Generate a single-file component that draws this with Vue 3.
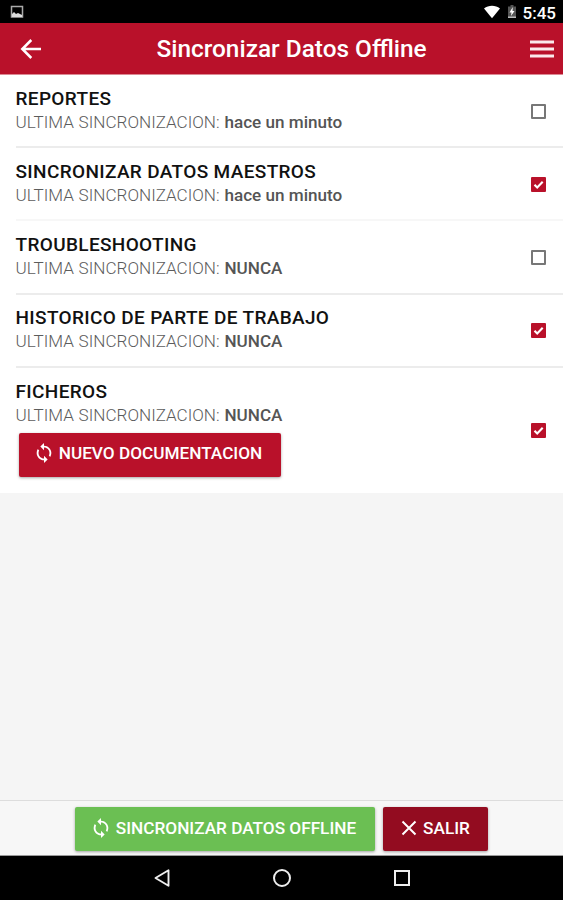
<script setup>
import {ref} from 'vue'

const syncPath = 'M12 4V1L8 5l4 4V6c3.31 0 6 2.69 6 6 0 1.01-.25 1.97-.7 2.8l1.46 1.46C19.54 15.03 20 13.57 20 12c0-4.42-3.58-8-8-8zm0 14c-3.31 0-6-2.69-6-6 0-1.01.25-1.97.7-2.8L5.24 7.74C4.46 8.97 4 10.43 4 12c0 4.42 3.58 8 8 8v3l4-4-4-4v3z'

const items = ref([
    {nombre: 'REPORTES', fecha: 'hace un minuto', checked: false},
    {nombre: 'SINCRONIZAR DATOS MAESTROS', fecha: 'hace un minuto', checked: true},
    {nombre: 'TROUBLESHOOTING', fecha: 'NUNCA', checked: false},
    {nombre: 'HISTORICO DE PARTE DE TRABAJO', fecha: 'NUNCA', checked: true},
    {nombre: 'FICHEROS', fecha: 'NUNCA', checked: true, boton: 'NUEVO DOCUMENTACION'},
])

const toggle = (item) => {
    item.checked = !item.checked
}
</script>

<template>
    <div class="screen">
        <div class="status">
            <svg class="picture" width="14" height="14" viewBox="0 0 14 14">
                <path d="M1.5 1.5h11v10.5h-11z" fill="none" stroke="#aaa" stroke-width="1.5" />
                <path d="M2 12V9l2-2 2 2 2-1 4 2v2z" fill="#ddd" />
            </svg>
            <svg class="wifi" width="18" height="14" viewBox="0 0 18 14">
                <path d="M1 3.6C5.5-.2 12.5-.2 17 3.6L9 13.3z" fill="#fff" />
            </svg>
            <svg class="battery" width="10" height="14" viewBox="0 0 10 14">
                <path d="M3.5 0h3v1.5H9V13H1V1.5h2.5z" fill="#555" />
                <path d="M5.8 2L2.5 7.5h2L4 11l3.5-5h-2z" fill="#fff" />
                <path d="M1 11.5h8V13H1z" fill="#bbb" />
            </svg>
            <span class="clock">5:45</span>
        </div>

        <header class="toolbar">
            <svg class="back" width="22" height="22" viewBox="0 0 22 22">
                <path d="M21 11H2.5M11.3 2L2.3 11l9 9" fill="none" stroke="#fff" stroke-width="2.5" />
            </svg>
            <h1>Sincronizar Datos Offline</h1>
            <svg class="menu" width="24" height="18" viewBox="0 0 24 18">
                <path d="M0 2h24M0 9h24M0 16h24" stroke="#fbe9eb" stroke-width="2.8" />
            </svg>
        </header>

        <main class="content">
            <ul class="list">
                <li v-for="item in items" :key="item.nombre" class="item">
                    <div class="inner">
                        <div class="texts">
                            <h2>{{ item.nombre }}</h2>
                            <p><span class="label">ULTIMA SINCRONIZACION:</span> <b>{{ item.fecha }}</b></p>
                            <button v-if="item.boton" class="btn btn-doc">
                                <svg width="22" height="22" viewBox="0 0 24 24"><path :d="syncPath" fill="#fff" /></svg>
                                <span>{{ item.boton }}</span>
                            </button>
                        </div>
                        <div class="check" :class="{ checked: item.checked }" @click="toggle(item)">
                            <svg v-if="item.checked" width="15" height="15" viewBox="0 0 15 15">
                                <path d="M3.5 7.8l2.7 2.7 5.5-5.8" fill="none" stroke="#fff" stroke-width="2.1" />
                            </svg>
                        </div>
                    </div>
                </li>
            </ul>
        </main>

        <footer class="footer">
            <button class="btn btn-sync">
                <svg width="22" height="22" viewBox="0 0 24 24"><path :d="syncPath" fill="#fff" /></svg>
                <span>SINCRONIZAR DATOS OFFLINE</span>
            </button>
            <button class="btn btn-exit">
                <svg width="16" height="16" viewBox="0 0 16 16"><path d="M1.5 1.5l13 13M14.5 1.5l-13 13" stroke="#fff" stroke-width="2" /></svg>
                <span>SALIR</span>
            </button>
        </footer>

        <nav class="nav">
            <svg width="18" height="20" viewBox="0 0 18 20"><path d="M15.5 2.3v15.4L2.5 10z" fill="none" stroke="#eee" stroke-width="1.9" stroke-linejoin="round" /></svg>
            <svg width="20" height="20" viewBox="0 0 20 20"><circle cx="10" cy="10" r="8" fill="none" stroke="#eee" stroke-width="2" /></svg>
            <svg width="18" height="18" viewBox="0 0 18 18"><path d="M2 2h14v14H2z" fill="none" stroke="#eee" stroke-width="2" /></svg>
        </nav>
    </div>
</template>

<style>
body {
    margin: 0;
    background: #000;
}
</style>

<style scoped>
.screen {
    display: flex;
    flex-direction: column;
    height: 900px;
    overflow: hidden;
    background: #f5f5f5;
    font-family: Roboto, "Liberation Sans", sans-serif;
}
h1, h2, p, ul {
    margin: 0;
    padding: 0;
}
svg {
    display: block;
    flex: none;
}
.status {
    display: flex;
    align-items: center;
    box-sizing: border-box;
    height: 23px;
    padding: 1px 7px 0 10px;
    background: #000;
    color: #fff;
}
.wifi {
    margin-left: auto;
}
.battery {
    margin: 0 6px;
}
.clock {
    font-size: 17px;
    font-weight: 500;
    line-height: 20px;
    margin-top: 2px;
}
.toolbar {
    display: flex;
    align-items: center;
    box-sizing: border-box;
    height: 52px;
    padding: 0 9px 0 20px;
    background: #b9112a;
    border-bottom: 1px solid #dc8993;
    color: #fff;
}
h1 {
    flex: 1;
    padding-left: 11px;
    text-align: center;
    font-size: 24.4px;
    font-weight: 500;
    line-height: 50px;
}
.content {
    flex: 1;
}
.list {
    list-style: none;
    background: #fff;
}
.item {
    padding-left: 15.5px;
}
.inner {
    display: flex;
    align-items: center;
    box-sizing: border-box;
    height: 73.2px;
    padding: 1px 17px 0 0;
    border-bottom: 2px solid #ececec;
}
.item:nth-child(2) .inner {
    border-color: #f7f7f7;
}
.item:last-child .inner {
    height: 125.2px;
    border-bottom: 0;
}
.texts {
    flex: 1;
    align-self: flex-start;
    padding-top: 10.8px;
}
h2 {
    font-size: 19px;
    font-weight: 500;
    line-height: 24px;
    letter-spacing: .35px;
    color: #111;
}
p {
    font-size: 17.1px;
    line-height: 23px;
    color: #5c5c5c;
    white-space: nowrap;
    word-spacing: .6px;
}
.label {
    font-weight: 300;
}
b {
    font-weight: 500;
    color: #555;
    word-spacing: 0;
}
.check {
    box-sizing: border-box;
    width: 15px;
    height: 15px;
    border: 2px solid #777;
    border-radius: 1px;
}
.check.checked {
    border: 0;
    background: #b9112a;
}
.btn {
    display: flex;
    align-items: center;
    justify-content: center;
    gap: 4px;
    height: 44px;
    padding: 0 0 3px;
    border: 0;
    border-radius: 2px;
    box-shadow: 0 1px 3px rgba(0, 0, 0, .35);
    color: #fff;
    font-family: inherit;
    font-size: 17.2px;
    font-weight: 500;
    white-space: nowrap;
}
.btn-doc {
    width: 262px;
    margin: 6px 0 0 3px;
    padding-right: 4px;
    background: #b9112a;
}
.footer {
    display: flex;
    justify-content: center;
    gap: 8px;
    box-sizing: border-box;
    height: 56px;
    padding-top: 6px;
    border-top: 1px solid #ddd;
    border-bottom: 1px solid #999;
    background: #f7f7f7;
}
.btn-sync {
    width: 300px;
    padding-right: 4px;
    background: #6bbf53;
}
.btn-exit {
    width: 105px;
    gap: 6px;
    background: #930c20;
}
.nav {
    display: flex;
    align-items: center;
    justify-content: center;
    gap: 101px;
    height: 44px;
    background: #000;
}
</style>
